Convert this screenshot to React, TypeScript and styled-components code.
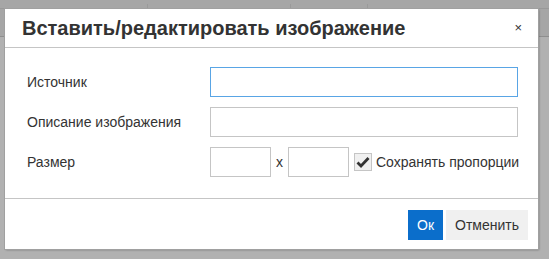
import styled, { createGlobalStyle } from "styled-components";

const GlobalStyle = createGlobalStyle`
    html, body {
        margin: 0;
        padding: 0;
        background: #b1b1b1;
        font-family: "Liberation Sans", Arial, sans-serif;
    }
    * {
        box-sizing: border-box;
    }
`

const Page = styled.div`
    position: relative;
    width: 549px;
    height: 259px;
    overflow: hidden;
    background: #b1b1b1;
`

// editor underneath the modal overlay
const EditorToolbar = styled.div`
    height: 9px;
    display: flex;
    background: #a6a6a6;
    border-bottom: 1px solid #999999;
`

const ToolbarTick = styled.div<{ $left: number }>`
    margin-left: ${p => p.$left}px;
    width: 1px;
    height: 4px;
    margin-top: 4px;
    background: #9a9a9a;
`

const EditorMenuLine = styled.div`
    height: 28px;
    border-bottom: 1px solid #8e8e8e;
    background: #a6a6a6;
`

const Dialog = styled.div`
    position: absolute;
    left: 5px;
    top: 9px;
    width: 533px;
    height: 240px;
    background: #ffffff;
    box-shadow: 0 0 0 1px #a0a0a0, 1px 1px 2px rgba(0, 0, 0, 0.35);
    display: flex;
    flex-direction: column;
    color: #333333;
`

const Header = styled.div`
    height: 39px;
    flex-shrink: 0;
    border-bottom: 1px solid #c5c5c5;
    display: flex;
    align-items: center;
    justify-content: space-between;
    padding: 0 16px 0 17px;
`

const Title = styled.h1`
    margin: 0;
    font-size: 20px;
    font-weight: bold;
    color: #333333;
    line-height: 38px;
`

const Close = styled.span`
    font-size: 13px;
    color: #333333;
    line-height: 1;
    margin-top: -1px;
`

const Body = styled.div`
    flex: 1;
    padding: 19px 20px 0 22px;
    display: flex;
    flex-direction: column;
    gap: 10px;
`

const Row = styled.div`
    display: flex;
    align-items: center;
    height: 30px;
`

const Label = styled.label`
    width: 183px;
    flex-shrink: 0;
    font-size: 14px;
    color: #333333;
`

const TextInput = styled.input<{ $focused?: boolean; $width?: number }>`
    width: ${p => (p.$width ? `${p.$width}px` : "308px")};
    flex-shrink: 0;
    height: 30px;
    margin: 0;
    padding: 0 4px;
    border: 1px solid ${p => (p.$focused ? "#59a5e5" : "#c5c5c5")};
    background: #ffffff;
    outline: none;
    font-family: inherit;
    font-size: 14px;
`

const Times = styled.span`
    width: 17px;
    flex-shrink: 0;
    text-align: center;
    font-size: 14px;
    color: #333333;
`

const CheckLabel = styled.label`
    display: flex;
    align-items: center;
    gap: 4px;
    margin-left: 5px;
    font-size: 14px;
    white-space: nowrap;
    color: #333333;
`

const CheckBox = styled.span`
    width: 18px;
    height: 18px;
    flex-shrink: 0;
    border: 1px solid #c5c5c5;
    background: #f0f0f0;
    display: flex;
    align-items: center;
    justify-content: center;
`

const Footer = styled.div`
    height: 51px;
    flex-shrink: 0;
    border-top: 1px solid #c5c5c5;
    display: flex;
    justify-content: flex-end;
    align-items: flex-start;
    gap: 3px;
    padding: 11px 10px 0 0;
`

const Button = styled.button<{ $primary?: boolean }>`
    height: 30px;
    margin: 0;
    padding: 0 9px;
    border: none;
    background: ${p => (p.$primary ? "#0b6ecb" : "#f0f0f0")};
    color: ${p => (p.$primary ? "#ffffff" : "#333333")};
    font-family: inherit;
    font-size: 14px;
    cursor: pointer;
`

const App = () => {
    return (
        <>
            <GlobalStyle />
            <Page>
                <EditorToolbar>
                    <ToolbarTick $left={147} />
                    <ToolbarTick $left={142} />
                    <ToolbarTick $left={76} />
                </EditorToolbar>
                <EditorMenuLine />
                <Dialog>
                    <Header>
                        <Title>Вставить/редактировать изображение</Title>
                        <Close>×</Close>
                    </Header>
                    <Body>
                        <Row>
                            <Label>Источник</Label>
                            <TextInput $focused />
                        </Row>
                        <Row>
                            <Label>Описание изображения</Label>
                            <TextInput />
                        </Row>
                        <Row>
                            <Label>Размер</Label>
                            <TextInput $width={61} />
                            <Times>x</Times>
                            <TextInput $width={61} />
                            <CheckLabel>
                                <CheckBox>
                                    <svg width="14" height="12" viewBox="0 0 14 12">
                                        <path d="M1.5 6.5 L5 10 L12.5 2" fill="none" stroke="#333" strokeWidth="2.8" />
                                    </svg>
                                </CheckBox>
                                Сохранять пропорции
                            </CheckLabel>
                        </Row>
                    </Body>
                    <Footer>
                        <Button $primary>Ок</Button>
                        <Button>Отменить</Button>
                    </Footer>
                </Dialog>
            </Page>
        </>
    )
}

export default App;
